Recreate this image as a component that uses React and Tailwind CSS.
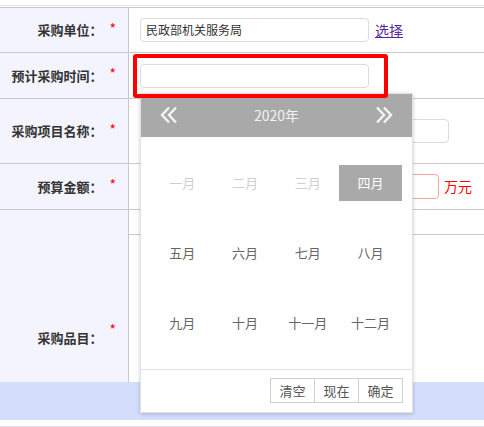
// App.jsx - 采购计划表单 with the month picker opened on 预计采购时间

const font = { fontFamily: '"Noto Sans CJK SC", "Noto Sans", sans-serif' };

const months = ['一月', '二月', '三月', '四月', '五月', '六月', '七月', '八月', '九月', '十月', '十一月', '十二月'];

function Star() {
  return <span className="text-[14px] text-[#f00] leading-none -mt-[5px]">*</span>;
}

function Label({ text }) {
  return (
    <div className="w-[129px] shrink-0 border-r border-[#c9c9c9] bg-[#f4f4fe] flex items-center justify-end pr-[12px] gap-[7px]">
      <span className="text-[13px] font-bold text-[#333]">{text}</span>
      <Star />
    </div>
  );
}

// double chevron used for prev / next year
function Chevrons({ flip }) {
  return (
    <svg width="18" height="18" viewBox="0 0 18 18" className={flip ? 'rotate-180' : ''}>
      <path d="M9 1.5 L2 9 L9 16.5 M16 1.5 L9 9 L16 16.5" fill="none" stroke="#f4f4f4" strokeWidth="2.4" />
    </svg>
  );
}

function MonthPicker() {
  return (
    <div className="absolute left-[140px] top-[93px] z-10 w-[273px] h-[320px] bg-white border border-[#e2e2e2] shadow-[0_1px_4px_rgba(0,0,0,0.2)] flex flex-col">
      {/* Header */}
      <div className="h-[44px] bg-[#a9a9a9] flex items-center justify-between pl-[19px] pr-[19px] text-[#f2f2f2]">
        <Chevrons />
        <span className="text-[14px]">2020年</span>
        <Chevrons flip />
      </div>

      {/* Months */}
      <div className="flex-1 grid grid-cols-4 px-[10px] py-[11px]">
        {months.map((m, idx) => (
          <div key={m} className="h-[70px] flex items-center justify-center">
            <div
              className={`w-[63px] h-[36px] flex items-center justify-center text-[13px] ${
                idx === 3
                  ? 'bg-[#a9a9a9] text-white'
                  : idx < 3
                  ? 'text-[#cfcfcf]'
                  : 'text-[#666]'
              }`}
            >
              {m}
            </div>
          </div>
        ))}
      </div>

      {/* Footer */}
      <div className="h-[45px] border-t border-[#e2e2e2] flex items-center justify-end pr-[9px]">
        {['清空', '现在', '确定'].map((b, idx) => (
          <button
            key={b}
            className={`w-[45px] h-[25px] border border-[#cfcfcf] text-[13px] text-[#555] bg-white ${
              idx > 0 ? '-ml-px' : ''
            }`}
          >
            {b}
          </button>
        ))}
      </div>
    </div>
  );
}

export default function App() {
  return (
    <div className="relative w-[484px] h-[427px] bg-white overflow-hidden" style={font}>
      <div className="mt-[5px] border-t border-[#e6e6e6] pt-px">
        <div className="border-t border-[#c9c9c9]">
          {/* 采购单位 */}
          <div className="h-[45px] flex border-b border-[#c9c9c9]">
            <Label text="采购单位：" />
            <div className="flex-1 flex items-center pl-[11px]">
              <div className="w-[229px] h-[24px] border border-[#dcdcdc] rounded-[4px] flex items-center pl-[5px] text-[12px] text-[#333]">
                民政部机关服务局
              </div>
              <a className="ml-[6px] text-[14px] text-[#5a2a9a] underline">选择</a>
            </div>
          </div>

          {/* 预计采购时间 */}
          <div className="h-[46px] flex border-b border-[#c9c9c9]">
            <Label text="预计采购时间：" />
            <div className="flex-1 flex items-center pl-[11px]">
              <div className="w-[229px] h-[24px] border border-[#dcdcdc] rounded-[4px]"></div>
            </div>
          </div>

          {/* 采购项目名称 */}
          <div className="h-[65px] flex border-b border-[#c9c9c9]">
            <Label text="采购项目名称：" />
            <div className="flex-1 flex items-center pl-[11px]">
              <div className="w-[309px] h-[24px] border border-[#dcdcdc] rounded-[4px]"></div>
            </div>
          </div>

          {/* 预算金额 */}
          <div className="h-[46px] flex border-b border-[#c9c9c9]">
            <Label text="预算金额：" />
            <div className="flex-1 flex items-center pl-[11px]">
              <div className="w-[299px] h-[25px] border border-[#f7a3a3] rounded-[4px]"></div>
              <span className="ml-[5px] text-[14px] text-[#f00]">万元</span>
            </div>
          </div>

          {/* 采购品目 */}
          <div className="h-[172px] flex">
            <div className="w-[129px] shrink-0 border-r border-[#c9c9c9] bg-[#f4f4fe] flex items-end justify-end pr-[12px] pb-[35px] gap-[7px]">
              <span className="text-[13px] font-bold text-[#333]">采购品目：</span>
              <span className="text-[14px] text-[#f00] leading-none mb-[11px]">*</span>
            </div>
            <div className="flex-1 pt-[24px]">
              <div className="border-t border-[#c9c9c9]"></div>
            </div>
          </div>
        </div>

        {/* Blue action bar */}
        <div className="h-[38px] bg-[#d3ddfc]"></div>
        <div className="mt-[6px] border-t border-[#e2e2e2]"></div>
      </div>

      <MonthPicker />

      {/* Red highlight box */}
      <div className="absolute left-[133px] top-[54px] z-20 w-[255px] h-[44px] border-[4px] border-[#ff0000] rounded-[3px] pointer-events-none"></div>
    </div>
  );
}
